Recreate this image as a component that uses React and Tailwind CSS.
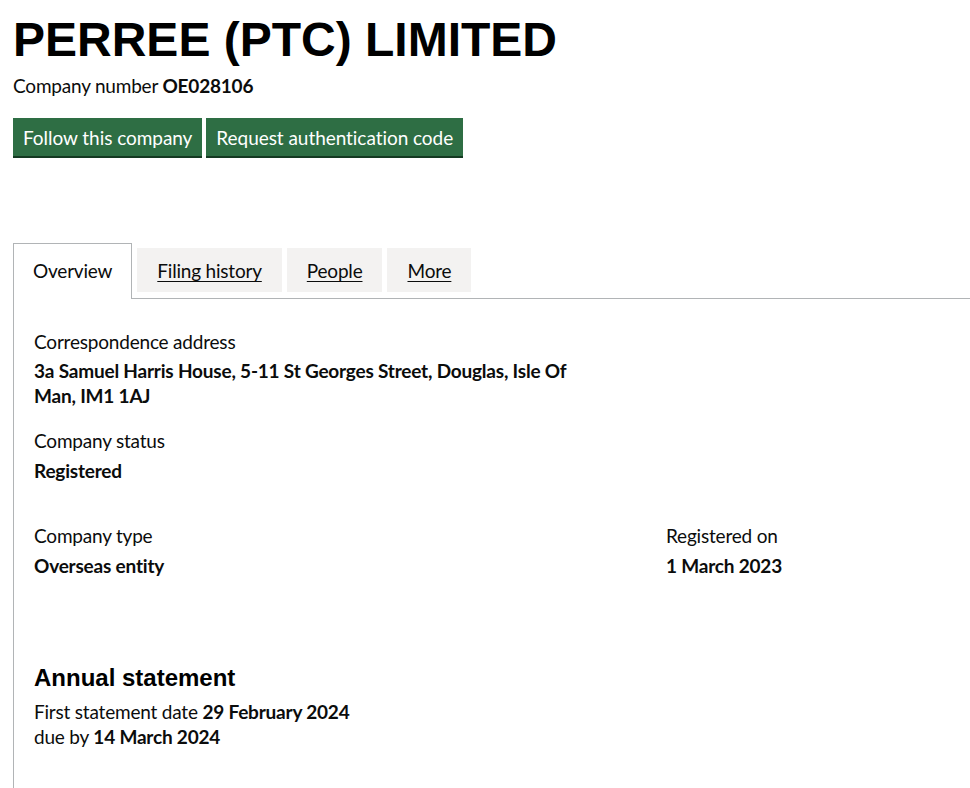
export default function App() {
  const body = { fontFamily: "Lato, 'Noto Sans', sans-serif" };
  return (
    <div className="min-h-[788px] bg-white text-[#0b0c0c] pl-[13px] pt-[15px] tracking-[-0.2px]" style={body}>
      <h1 className="font-['Liberation_Sans',Arial,sans-serif] font-bold text-[48px] leading-[50px] m-0 text-black tracking-normal">
        PERREE (PTC) LIMITED
      </h1>
      <p className="mt-[8px] text-[19px] leading-[25px]">
        Company number <strong className="font-bold">OE028106</strong>
      </p>
      <div className="mt-[20px] flex gap-[4px]">
        <button className="bg-[#2e6e44] text-white text-[19px] leading-[19px] px-[10px] pt-[10px] pb-[9px] shadow-[0_2px_0_#143a22] tracking-[-0.05px]">
          Follow this company
        </button>
        <button className="bg-[#2e6e44] text-white text-[19px] leading-[19px] px-[10px] pt-[10px] pb-[9px] shadow-[0_2px_0_#143a22] tracking-[-0.05px]">
          Request authentication code
        </button>
      </div>

      <div className="mt-[87px]">
        <ul className="flex items-start border-b border-[#b1b4b6] text-[19px] leading-[25px]">
          <li className="bg-white border border-b-0 border-[#b1b4b6] px-[19px] pt-[14px] pb-[16px] -mb-px">
            Overview
          </li>
          <li className="ml-[5px] mt-[5px] bg-[#f3f2f1] px-[20px] pt-[10px] pb-[9px] underline underline-offset-[3px]">
            Filing history
          </li>
          <li className="ml-[5px] mt-[5px] bg-[#f3f2f1] px-[20px] pt-[10px] pb-[9px] underline underline-offset-[3px]">
            People
          </li>
          <li className="ml-[5px] mt-[5px] bg-[#f3f2f1] px-[20px] pt-[10px] pb-[9px] underline underline-offset-[3px]">
            More
          </li>
        </ul>
        <div className="border-l border-[#b1b4b6] pl-[20px] pt-[30px] pb-[40px] text-[19px] leading-[25px]">
          <dl>
            <dt>Correspondence address</dt>
            <dd className="mt-[4px] font-bold w-[552px]">
              3a Samuel Harris House, 5-11 St Georges Street, Douglas, Isle Of Man, IM1 1AJ
            </dd>
            <dt className="mt-[20px]">Company status</dt>
            <dd className="mt-[5px] font-bold">Registered</dd>
          </dl>
          <div className="mt-[40px] grid grid-cols-[632px_1fr]">
            <dl>
              <dt>Company type</dt>
              <dd className="mt-[5px] font-bold">Overseas entity</dd>
            </dl>
            <dl>
              <dt>Registered on</dt>
              <dd className="mt-[5px] font-bold">1 March 2023</dd>
            </dl>
          </div>
          <h2 className="mt-[85px] font-['Liberation_Sans',Arial,sans-serif] font-bold text-[24px] leading-[30px] text-black tracking-normal">
            Annual statement
          </h2>
          <p className="mt-[6px]">
            First statement date <strong>29 February 2024</strong>
            <br />
            due by <strong>14 March 2024</strong>
          </p>
        </div>
      </div>
    </div>
  );
}
